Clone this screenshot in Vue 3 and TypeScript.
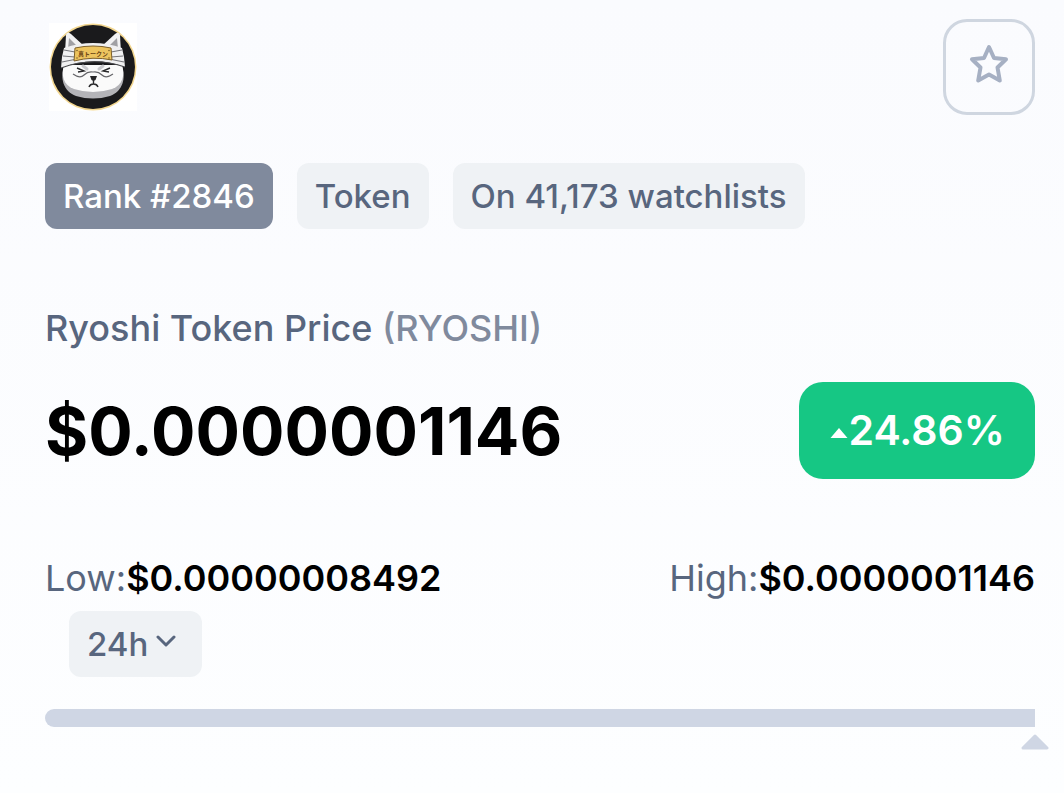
<script setup lang="ts">
import { ref } from 'vue'

const range = ref('24h')
const ranges = ['24h', '7d', '30d']
const watched = ref(false)
const position = 100
</script>

<template>
  <main class="page">
    <header class="top">
      <svg class="logo" viewBox="0 0 88 88" role="img" aria-label="Ryoshi Token logo">
        <rect width="88" height="88" fill="#fff" />
        <circle cx="44" cy="44" r="43.500" fill="#f3d790" />
        <circle cx="44" cy="44" r="42" fill="#1a1a1c" />
        <path d="M16 30 L17 12 Q18 8 22 11 L35 23 Z" fill="#f2f2f3" />
        <path d="M19 26 L20 15 L29 24 Z" fill="#a0a0a4" />
        <path d="M72 30 L71 12 Q70 8 66 11 L53 23 Z" fill="#f2f2f3" />
        <path d="M69 26 L68 15 L59 24 Z" fill="#a0a0a4" />
        <path d="M15 43 C11 55 14 68 27 73 Q44 78 61 73 C74 68 77 55 73 43 Z" fill="#b4b4b8" />
        <path d="M15 42 C12 52 14 62 25 66 Q44 72 63 66 C74 62 76 52 73 42 Z" fill="#fafafa" />
        <path d="M15 25 Q44 15 73 25 L75 34 L76 44 Q44 32 12 45 L13 34 Z" fill="#f0f0f1" />
        <path d="M12 45 Q44 33 76 44" fill="none" stroke="#4b4b4f" stroke-width="1.200" />
        <path d="M15 27 L26 29 M14 33 L26 34 M13 39 L28 36 M73 27 L62 29 M74 33 L62 34 M75 39 L60 36" stroke="#77777c" stroke-width="1.200" />
        <path d="M26 25 Q44 21 62 25 L63 37 Q44 33 25 38 Z" fill="#edc45f" stroke="#7d602a" stroke-width="1" />
        <g fill="#7d602a">
          <circle cx="28" cy="27.500" r="0.800" />
          <circle cx="28" cy="35" r="0.800" />
          <circle cx="60" cy="27.500" r="0.800" />
          <circle cx="60" cy="35" r="0.800" />
        </g>
        <text x="44" y="32.500" text-anchor="middle" class="logo-text">真トークン</text>
        <path d="M34 43 L38 46 M54 43 L50 46" stroke="#c9c9cd" stroke-width="3" stroke-linecap="round" />
        <path d="M28 45 L35 48 L29 49 M61 45 L54 48 L60 49" fill="none" stroke="#2b2b2d" stroke-width="1.400" />
        <path d="M24 51 Q31 56 35 52 Q39 48 44 49 Q49 48 53 52 Q57 56 64 51" fill="none" stroke="#66666a" stroke-width="1.200" />
        <path d="M41 53 H48 L46.500 57 L44.500 58 L42.500 57 Z" fill="#252527" />
        <path d="M44.500 57 V61 M40 64 Q41 61 44.500 61 Q48 61 49 64" fill="none" stroke="#2b2b2d" stroke-width="1.400" />
      </svg>
      <button class="star" type="button" aria-label="Add to watchlist" :aria-pressed="watched" @click="watched = !watched">
        <svg viewBox="0 0 42 42" aria-hidden="true">
          <path d="M21 4 L26 15 L38 16.200 L29.500 24.500 L31.800 37.500 L21 31.500 L10.200 37.500 L12.500 24.500 L4 16.200 L16 15 Z" />
        </svg>
      </button>
    </header>

    <div class="tags">
      <span class="tag rank">Rank #2846</span>
      <span class="tag">Token</span>
      <span class="tag">On 41,173 watchlists</span>
    </div>

    <h1 class="name">Ryoshi Token Price <span class="symbol">(RYOSHI)</span></h1>

    <div class="price-row">
      <span class="price">$0.0000001146</span>
      <span class="change">
        <svg viewBox="0 0 18 12" aria-hidden="true"><path d="M9 1 L17.500 11 H0.500 Z" /></svg>24.86%
      </span>
    </div>

    <div class="limits">
      <span>Low:<strong>$0.00000008492</strong></span>
      <span>High:<strong>$0.0000001146</strong></span>
    </div>

    <div class="range">
      <select v-model="range" aria-label="Time range">
        <option v-for="r in ranges" :key="r" :value="r">{{ r }}</option>
      </select>
      <svg viewBox="0 0 20 12" aria-hidden="true"><path d="M2 2 L10 10 L18 2" /></svg>
    </div>

    <div class="track">
      <div class="fill" :style="{ width: position + '%' }"></div>
    </div>
    <div class="marker">
      <svg viewBox="0 0 28 16" aria-hidden="true"><path d="M2 14 L14 2 L26 14 Z" /></svg>
    </div>
  </main>
</template>

<style>
html {
  min-height: 100%;
  background: linear-gradient(#fafbfe, #fdfeff);
}
</style>

<style scoped>
.page {
  padding: 19px 29px 42px 45px;
  font-family: Inter, "Noto Sans CJK JP", sans-serif;
  font-optical-sizing: none;
  color: #58667e;
}

.top {
  display: flex;
  align-items: center;
  justify-content: space-between;
}

.logo {
  width: 88px;
  height: 88px;
  margin-left: 4px;
}

.logo-text {
  font: 700 6px "Noto Sans CJK JP", sans-serif;
  fill: #6b4313;
}

.star {
  display: flex;
  align-items: center;
  justify-content: center;
  box-sizing: border-box;
  width: 92px;
  height: 96px;
  padding: 0 0 6px;
  border: 3px solid #cfd6e0;
  border-radius: 24px;
  background: transparent;
}

.star svg {
  width: 42px;
  height: 42px;
  fill: none;
  stroke: #a6b0c3;
  stroke-width: 4;
  stroke-linejoin: round;
}

.tags {
  display: flex;
  flex-wrap: wrap;
  gap: 24px;
  margin-top: 48px;
}

.tag {
  padding: 0 18px;
  border-radius: 12px;
  background: #eff2f5;
  font-size: 33px;
  font-weight: 500;
  line-height: 66px;
}

.rank {
  background: #808a9d;
  color: #fff;
}

.name {
  margin: 72px 0 0;
  font-size: 36px;
  font-weight: 500;
  line-height: 54px;
}

.symbol {
  color: #808a9d;
}

.price-row {
  display: flex;
  align-items: center;
  justify-content: space-between;
  margin-top: 27px;
}

.price {
  color: #000;
  font-size: 66px;
  font-weight: 700;
  line-height: 96px;
}

.change {
  display: flex;
  align-items: center;
  padding: 0 30px;
  border-radius: 24px;
  background: #16c784;
  color: #fff;
  font-size: 41px;
  font-weight: 600;
  line-height: 97px;
}

.change svg {
  width: 20px;
  height: 12px;
  margin-top: 4px;
  fill: #fff;
}

.limits {
  display: flex;
  justify-content: space-between;
  margin-top: 72px;
  font-size: 36px;
  line-height: 54px;
}

.limits strong {
  color: #000;
  font-weight: 600;
}

.range {
  position: relative;
  width: 133px;
  margin: 6px 0 0 24px;
}

.range select {
  display: block;
  width: 100%;
  height: 66px;
  padding: 0 18px;
  border: 0;
  border-radius: 12px;
  appearance: none;
  background: #eff2f5;
  color: inherit;
  font: 500 33px Inter, sans-serif;
}

.range svg {
  position: absolute;
  top: 24px;
  right: 26px;
  width: 20px;
  height: 12px;
  fill: none;
  stroke: #58667e;
  stroke-width: 3;
  stroke-linecap: round;
  stroke-linejoin: round;
  pointer-events: none;
}

.track {
  overflow: hidden;
  height: 18px;
  margin-top: 32px;
  border-radius: 9px 0 0 9px;
  background: #eff2f5;
}

.fill {
  height: 100%;
  background: #cfd6e4;
}

.marker {
  display: flex;
  justify-content: flex-end;
  margin: 7px -14px 0 0;
}

.marker svg {
  width: 28px;
  height: 16px;
  fill: #cfd6e4;
  stroke: #cfd6e4;
  stroke-width: 3;
  stroke-linejoin: round;
}
</style>
